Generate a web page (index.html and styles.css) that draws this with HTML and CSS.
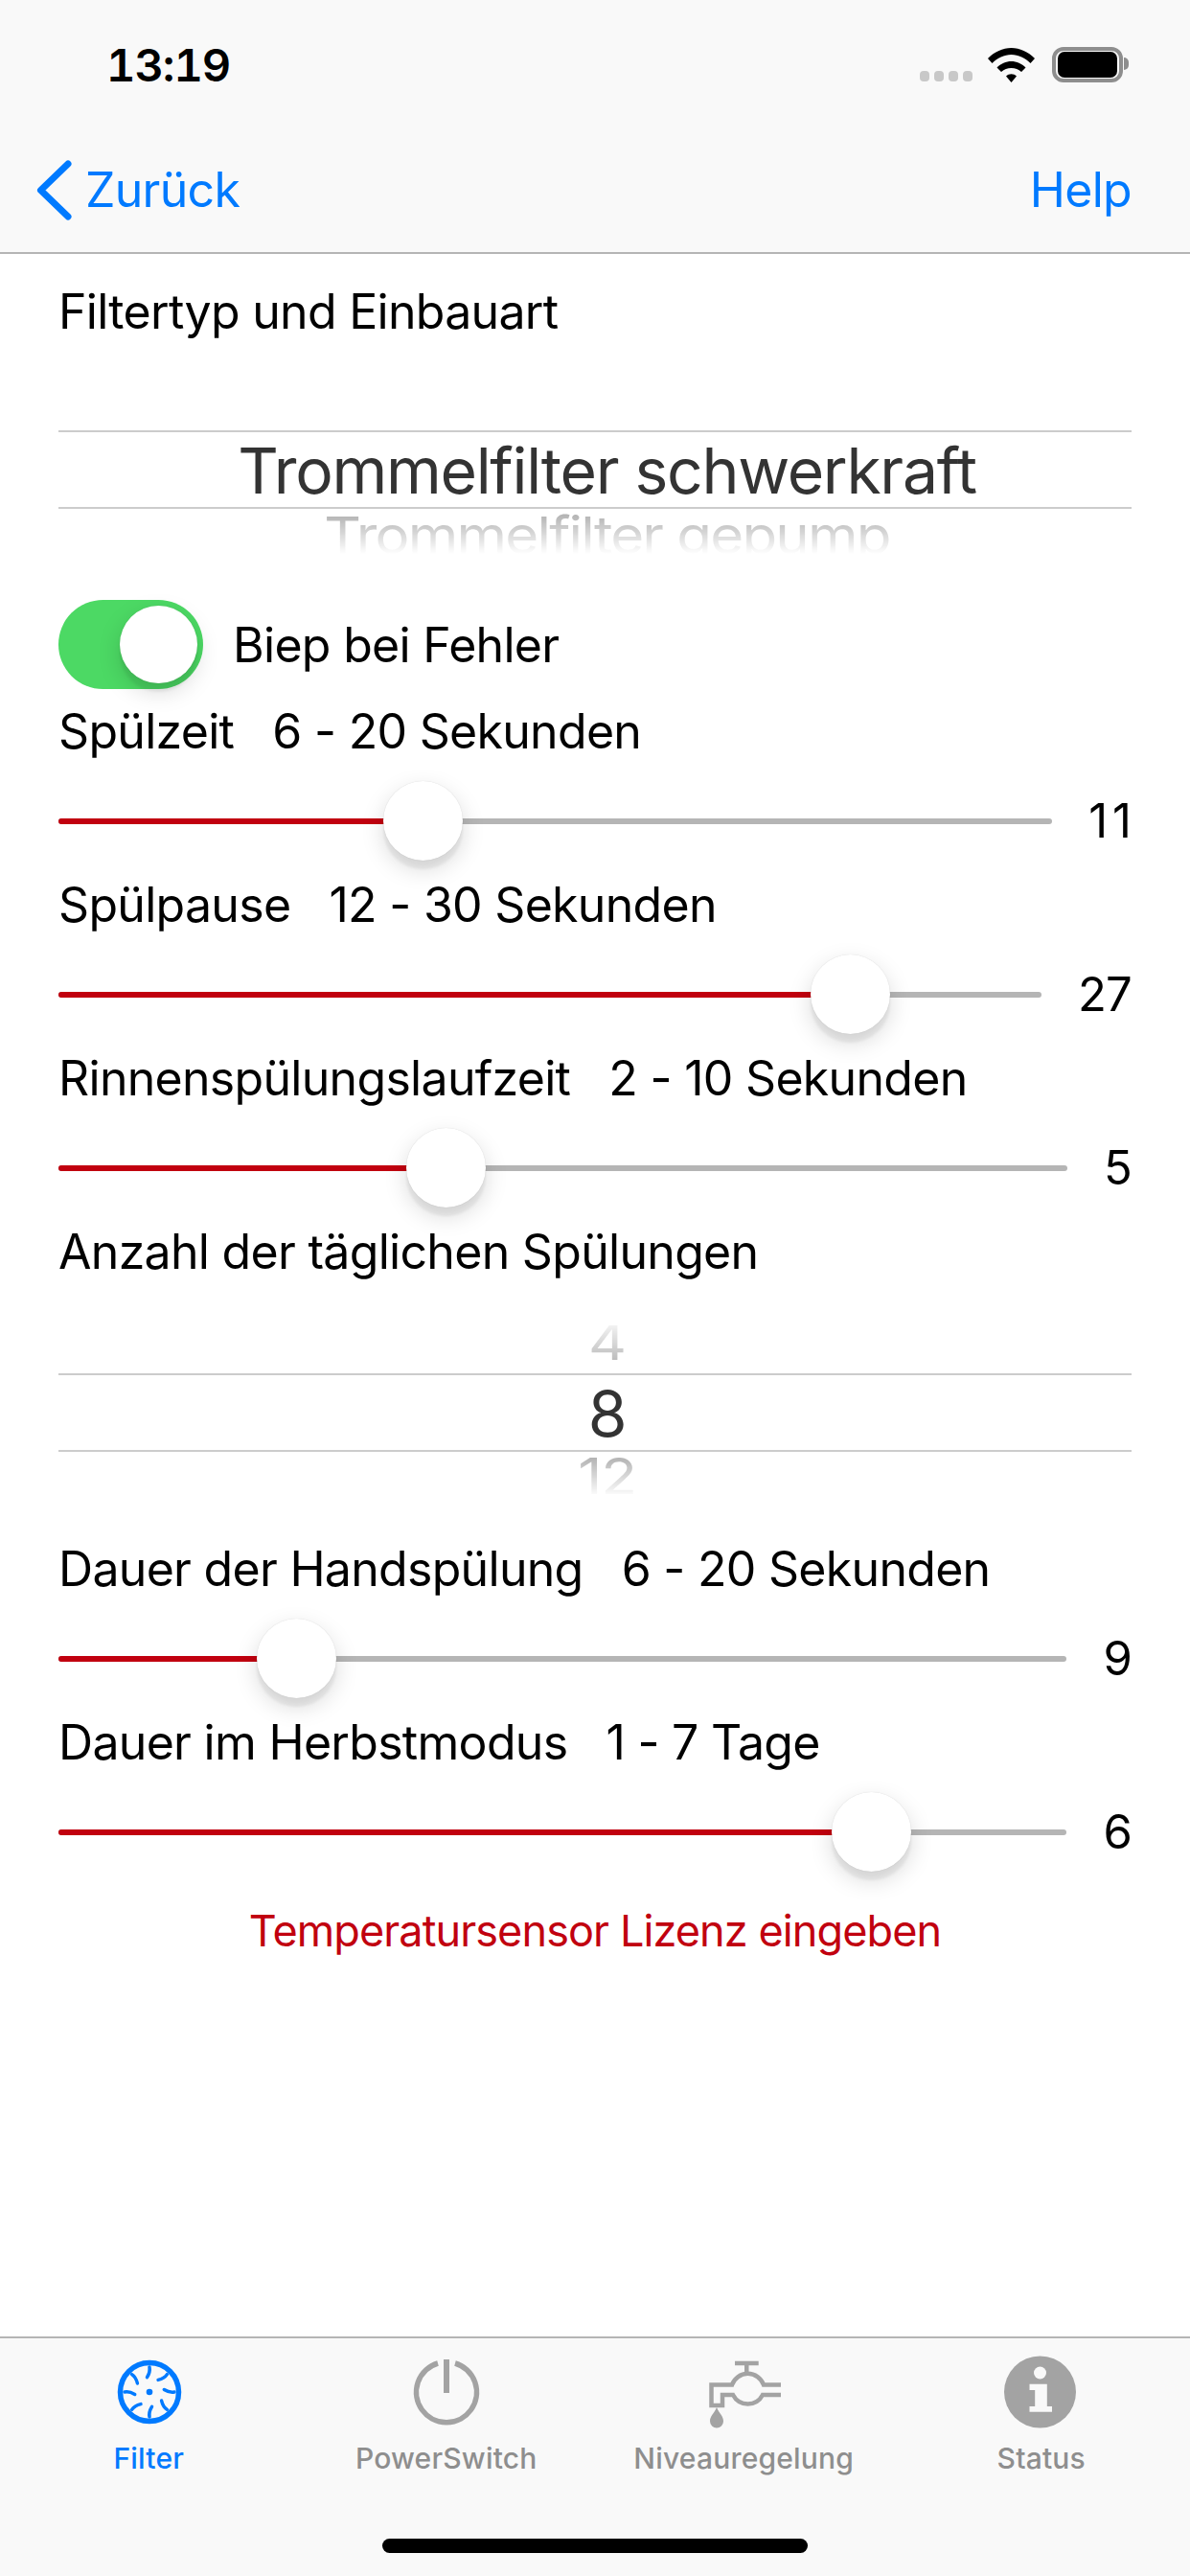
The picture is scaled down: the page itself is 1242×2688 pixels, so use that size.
FILE: index.html
```html
<!DOCTYPE html>
<html lang="de">
<head>
  <meta charset="UTF-8">
  <meta name="viewport" content="width=device-width, initial-scale=1.0">
  <title>Filter</title>
  <link rel="stylesheet" href="styles.css">
</head>
<body>
  <header class="top">
    <div class="status">
      <span class="time">13:19</span>
      <div class="status-icons">
        <div class="signal"><i></i><i></i><i></i><i></i></div>
        <svg class="wifi" width="50" height="36" viewBox="0 0 50 36">
          <path d="M0 11C7 4 15.5 0 24.5 0S42 4 49 11L44.5 16C39 10.5 32 7 24.5 7S10 10.5 4.5 16Z"/>
          <path d="M9.5 20.5C13.5 16.5 19 14 24.5 14S35.5 16.5 39.5 20.5L35 25C32 22.5 28.5 21 24.5 21S17 22.5 14 25Z"/>
          <path d="M19 29.5C20.5 28 22.5 27.2 24.5 27.2S28.5 28 30 29.5L24.5 36Z"/>
        </svg>
        <div class="battery"><div class="battery-fill"></div></div>
      </div>
    </div>
    <nav class="nav">
      <a class="back">
        <svg width="37" height="63" viewBox="0 0 37 63"><path d="M33 4L4.500 31.500L33 59" fill="none" stroke="#007aff" stroke-width="7" stroke-linecap="round" stroke-linejoin="round"/></svg>
        <span>Zurück</span>
      </a>
      <a class="help">Help</a>
    </nav>
  </header>

  <main class="content">
    <div class="label">Filtertyp und Einbauart</div>
    <div class="picker picker-first">
      <div class="picker-side picker-above"></div>
      <div class="picker-selected">Trommelfilter schwerkraft</div>
      <div class="picker-side picker-below"><span class="picker-long">Trommelfilter gepump</span></div>
    </div>

    <div class="toggle-row">
      <div class="toggle"><div class="toggle-knob"></div></div>
      <span class="toggle-label">Biep bei Fehler</span>
    </div>

    <div class="label">Spülzeit   6 - 20 Sekunden</div>
    <div class="slider-row">
      <div class="track"><div class="fill" style="width: 36.7%"><div class="thumb"></div></div></div>
      <span class="value value-wide">11</span>
    </div>

    <div class="label">Spülpause   12 - 30 Sekunden</div>
    <div class="slider-row">
      <div class="track"><div class="fill" style="width: 80.6%"><div class="thumb"></div></div></div>
      <span class="value">27</span>
    </div>

    <div class="label">Rinnenspülungslaufzeit   2 - 10 Sekunden</div>
    <div class="slider-row">
      <div class="track"><div class="fill" style="width: 38.5%"><div class="thumb"></div></div></div>
      <span class="value">5</span>
    </div>

    <div class="label">Anzahl der täglichen Spülungen</div>
    <div class="picker">
      <div class="picker-side picker-above"><span>4</span></div>
      <div class="picker-selected">8</div>
      <div class="picker-side picker-below"><span>12</span></div>
    </div>

    <div class="label">Dauer der Handspülung   6 - 20 Sekunden</div>
    <div class="slider-row">
      <div class="track"><div class="fill" style="width: 23.7%"><div class="thumb"></div></div></div>
      <span class="value">9</span>
    </div>

    <div class="label">Dauer im Herbstmodus   1 - 7 Tage</div>
    <div class="slider-row">
      <div class="track"><div class="fill" style="width: 80.7%"><div class="thumb"></div></div></div>
      <span class="value">6</span>
    </div>

    <a class="license">Temperatursensor Lizenz eingeben</a>
  </main>

  <footer class="tabbar">
    <a class="tab active">
      <svg width="110" height="90" viewBox="0 0 110 90">
        <g fill="none" stroke="#007aff" stroke-linecap="round">
          <circle cx="56" cy="45" r="30.500" stroke-width="5.500"/>
          <g stroke-width="3.500">
            <path d="M56 19Q57 24 53.500 29.700"/>
            <path d="M56 19Q57 24 53.500 29.700" transform="rotate(45 56 45)"/>
            <path d="M56 19Q57 24 53.500 29.700" transform="rotate(90 56 45)"/>
            <path d="M56 19Q57 24 53.500 29.700" transform="rotate(135 56 45)"/>
            <path d="M56 19Q57 24 53.500 29.700" transform="rotate(180 56 45)"/>
            <path d="M56 19Q57 24 53.500 29.700" transform="rotate(225 56 45)"/>
            <path d="M56 19Q57 24 53.500 29.700" transform="rotate(270 56 45)"/>
            <path d="M56 19Q57 24 53.500 29.700" transform="rotate(315 56 45)"/>
          </g>
        </g>
        <circle cx="56" cy="45" r="3.300" fill="#007aff"/>
      </svg>
      <span>Filter</span>
    </a>
    <a class="tab">
      <svg width="110" height="90" viewBox="0 0 110 90">
        <path d="M46 15A31.500 31.500 0 1 0 64 15" fill="none" stroke="#a3a3a3" stroke-width="5.500"/>
        <rect x="52" y="11" width="6" height="35" fill="#a3a3a3"/>
      </svg>
      <span>PowerSwitch</span>
    </a>
    <a class="tab">
      <svg width="110" height="90" viewBox="0 0 110 90">
        <path d="M94 37.500H76A17.500 17.500 0 0 0 43 37.500H21.500V59H33V48H44A17.500 17.500 0 0 0 75 48H94" fill="none" stroke="#a3a3a3" stroke-width="4.500"/>
        <path d="M46 12.700H70.700V17.300H60.500V26H56V17.300H46Z" fill="#a3a3a3"/>
        <path d="M27 61C24 68 20 70 20 75.500A7 7 0 0 0 34 75.500C34 70 30 68 27 61Z" fill="#a3a3a3"/>
      </svg>
      <span>Niveauregelung</span>
    </a>
    <a class="tab">
      <svg width="110" height="90" viewBox="0 0 110 90">
        <circle cx="53.500" cy="45" r="37.500" fill="#a3a3a3"/>
        <circle cx="53.500" cy="25" r="6.500" fill="#f9f9f9"/>
        <path d="M42.500 36.700H60.800V60H66V65.700H42.500V60H48.200V43H42.500Z" fill="#f9f9f9"/>
      </svg>
      <span>Status</span>
    </a>
    <div class="home-bar"></div>
  </footer>
</body>
</html>
```

FILE: styles.css
```css
* {
  box-sizing: border-box;
}
body {
  margin: 0;
  width: 1242px;
  height: 2688px;
  background: #fff;
  color: #000;
  font-family: Inter, "Liberation Sans", sans-serif;
  display: flex;
  flex-direction: column;
  overflow: hidden;
}

/* top bars */
.top {
  background: #f9f9f9;
  border-bottom: 2px solid #b5b5b5;
  height: 265px;
}
.status {
  height: 132px;
  padding: 3px 65px 0 111px;
  display: flex;
  justify-content: space-between;
  align-items: center;
}
.time {
  font-size: 47px;
  font-weight: 600;
  letter-spacing: -1px;
  font-variant-numeric: tabular-nums;
}
.status-icons {
  display: flex;
  align-items: flex-end;
}
.signal {
  display: flex;
  gap: 5px;
  margin-right: 16px;
  margin-bottom: 1px;
}
.signal i {
  width: 10px;
  height: 11px;
  border-radius: 4px;
  background: #c8c8c8;
}
.wifi {
  margin-right: 17px;
}
.battery {
  position: relative;
  width: 74px;
  height: 37px;
  margin-right: 5px;
  padding: 1px 2px;
  border: 4px solid #8e8e8e;
  border-radius: 12px;
}
.battery::after {
  content: "";
  position: absolute;
  right: -10px;
  top: 7px;
  width: 5px;
  height: 13px;
  border-radius: 0 6px 6px 0;
  background: #8e8e8e;
}
.battery-fill {
  height: 100%;
  background: #000;
  border-radius: 7px;
}
.nav {
  height: 131px;
  padding: 1px 61px 0 38px;
  display: flex;
  justify-content: space-between;
  align-items: center;
  color: #007aff;
  font-size: 50px;
  letter-spacing: -0.7px;
}
.back {
  display: flex;
  align-items: center;
  gap: 14px;
}

/* content */
.content {
  flex: 1;
  padding: 33px 61px 0;
  display: flex;
  flex-direction: column;
}
.label {
  height: 60px;
  line-height: 55px;
  font-size: 50px;
  letter-spacing: -0.7px;
  white-space: pre;
}
.picker {
  height: 240px;
  margin: 15px 0 16px;
  display: flex;
  flex-direction: column;
  justify-content: center;
  text-align: center;
  overflow: hidden;
}
.picker-first {
  margin-top: 12px;
}
.picker-selected {
  height: 82px;
  padding-left: 25px;
  line-height: 80px;
  border-top: 2px solid #ccc;
  border-bottom: 2px solid #ccc;
  color: #333;
  font-size: 66px;
  letter-spacing: -1.3px;
}
.picker-side {
  height: 50px;
  padding-left: 25px;
  overflow: hidden;
  color: #a8a8a8;
  font-size: 62px;
  line-height: 50px;
  letter-spacing: -1.2px;
}
.picker-above {
  line-height: 34px;
  -webkit-mask-image: linear-gradient(to top, #fff, rgba(255, 255, 255, 0.15));
  mask-image: linear-gradient(to top, #fff, rgba(255, 255, 255, 0.15));
}
.picker-below {
  -webkit-mask-image: linear-gradient(to bottom, #fff, transparent 94%);
  mask-image: linear-gradient(to bottom, #fff, transparent 94%);
}
.picker-side span {
  display: inline-block;
  transform: scaleY(0.85);
}
.picker-side .picker-long {
  font-size: 60px;
  letter-spacing: -1.8px;
  line-height: 54px;
  transform: scaleY(0.9);
}

.toggle-row {
  height: 93px;
  margin-bottom: 17px;
  display: flex;
  align-items: center;
  gap: 31px;
}
.toggle {
  width: 151px;
  height: 93px;
  padding: 6px;
  border-radius: 47px;
  background: #4cd964;
  display: flex;
  justify-content: flex-end;
}
.toggle-knob {
  width: 81px;
  height: 81px;
  border-radius: 50%;
  background: #fff;
  box-shadow: 0 9px 24px rgba(0, 0, 0, 0.15), 0 9px 3px rgba(0, 0, 0, 0.06), 0 0 1px rgba(0, 0, 0, 0.16);
}
.toggle-label {
  font-size: 50px;
  letter-spacing: -0.7px;
}

.slider-row {
  height: 121px;
  display: flex;
  align-items: center;
  gap: 38px;
}
.track {
  flex: 1;
  height: 6px;
  border-radius: 3px;
  background: #b5b5b5;
}
.fill {
  position: relative;
  height: 100%;
  border-radius: 3px 0 0 3px;
  background: #c1000f;
}
.thumb {
  position: absolute;
  right: -41px;
  top: -39px;
  width: 83px;
  height: 83px;
  border-radius: 50%;
  background: #fff;
  box-shadow: 0 9px 24px rgba(0, 0, 0, 0.15), 0 9px 3px rgba(0, 0, 0, 0.06), 0 0 1px rgba(0, 0, 0, 0.16);
}
.value {
  font-size: 49px;
  letter-spacing: -0.8px;
}
.value-wide {
  letter-spacing: 5px;
  margin-right: -5px;
}
.license {
  margin-top: 13px;
  height: 60px;
  line-height: 60px;
  text-align: center;
  color: #c1000f;
  font-size: 45px;
  letter-spacing: -0.9px;
}

/* tab bar */
.tabbar {
  position: relative;
  height: 250px;
  padding-top: 11px;
  background: #f9f9f9;
  border-top: 2px solid #b5b5b5;
  display: grid;
  grid-template-columns: repeat(4, 1fr);
  align-items: start;
}
.tab {
  display: flex;
  flex-direction: column;
  align-items: center;
  color: #8e8e8e;
  font-size: 30px;
  font-weight: 500;
  line-height: 36px;
  letter-spacing: 0.2px;
}
.tab span {
  margin-top: 6px;
}
.tab.active {
  color: #007aff;
}
.home-bar {
  position: absolute;
  left: 399px;
  bottom: 24px;
  width: 444px;
  height: 15px;
  border-radius: 8px;
  background: #000;
}
```
